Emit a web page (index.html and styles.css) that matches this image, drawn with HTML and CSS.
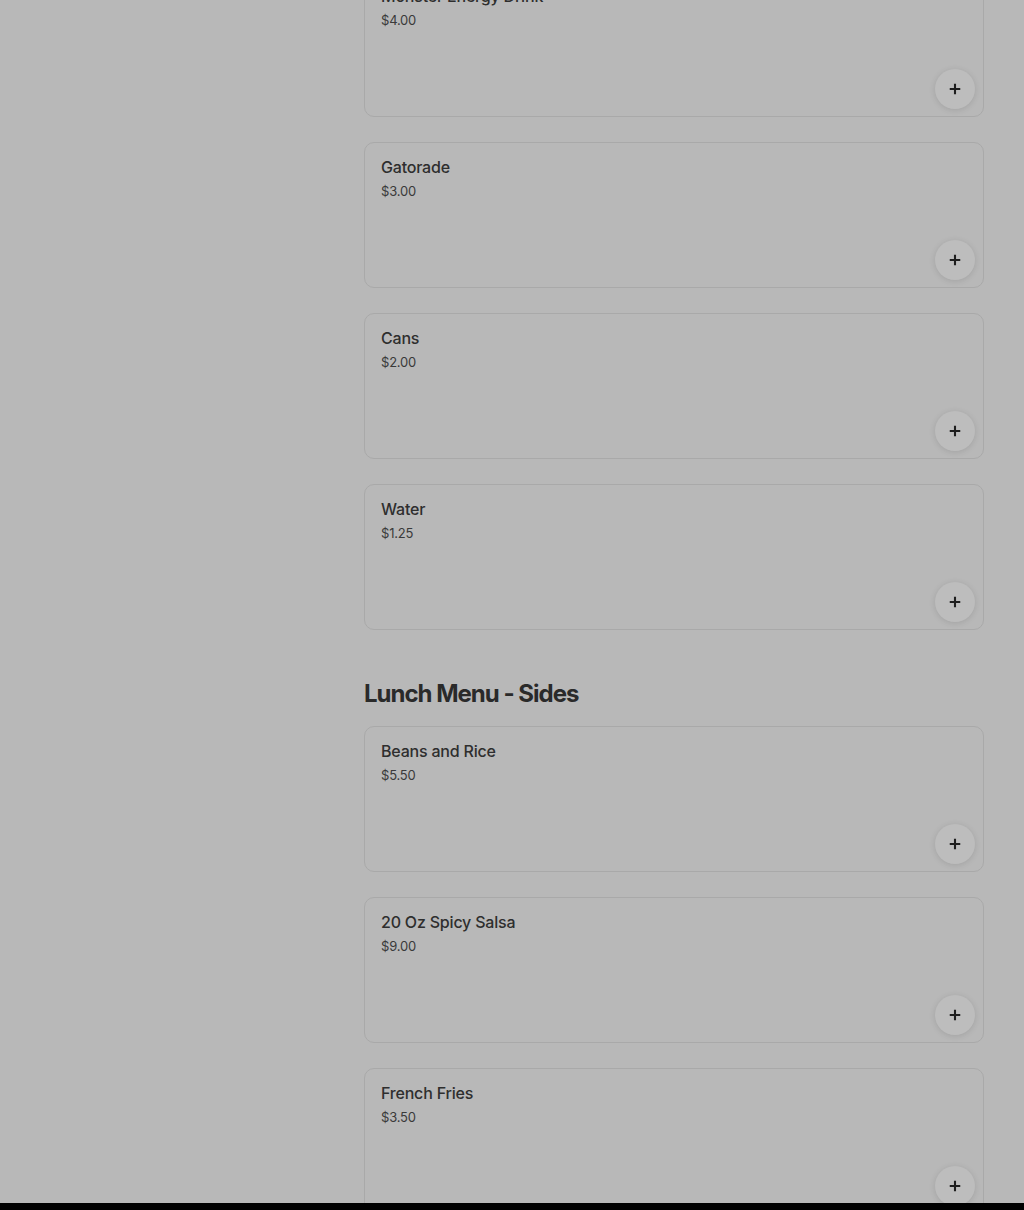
FILE: index.html
```html
<!DOCTYPE html>
<html>
<head>
<meta charset="utf-8">
<link rel="stylesheet" href="styles.css">
</head>
<body>
<div class="page">
  <main class="menu">
    <section class="group">
      <div class="card"><div class="info"><div class="name">Monster Energy Drink</div><div class="price">$4.00</div></div><button class="add" aria-label="Add"><svg viewBox="0 0 16 16" width="14" height="14"><path d="M8 2v12M2 8h12" stroke="#1e1e1e" stroke-width="2.4"/></svg></button></div>
      <div class="card"><div class="info"><div class="name">Gatorade</div><div class="price">$3.00</div></div><button class="add" aria-label="Add"><svg viewBox="0 0 16 16" width="14" height="14"><path d="M8 2v12M2 8h12" stroke="#1e1e1e" stroke-width="2.4"/></svg></button></div>
      <div class="card"><div class="info"><div class="name">Cans</div><div class="price">$2.00</div></div><button class="add" aria-label="Add"><svg viewBox="0 0 16 16" width="14" height="14"><path d="M8 2v12M2 8h12" stroke="#1e1e1e" stroke-width="2.4"/></svg></button></div>
      <div class="card"><div class="info"><div class="name">Water</div><div class="price">$1.25</div></div><button class="add" aria-label="Add"><svg viewBox="0 0 16 16" width="14" height="14"><path d="M8 2v12M2 8h12" stroke="#1e1e1e" stroke-width="2.4"/></svg></button></div>
    </section>
    <h2 class="heading">Lunch Menu - Sides</h2>
    <section class="group">
      <div class="card"><div class="info"><div class="name">Beans and Rice</div><div class="price">$5.50</div></div><button class="add" aria-label="Add"><svg viewBox="0 0 16 16" width="14" height="14"><path d="M8 2v12M2 8h12" stroke="#1e1e1e" stroke-width="2.4"/></svg></button></div>
      <div class="card"><div class="info"><div class="name">20 Oz Spicy Salsa</div><div class="price">$9.00</div></div><button class="add" aria-label="Add"><svg viewBox="0 0 16 16" width="14" height="14"><path d="M8 2v12M2 8h12" stroke="#1e1e1e" stroke-width="2.4"/></svg></button></div>
      <div class="card"><div class="info"><div class="name">French Fries</div><div class="price">$3.50</div></div><button class="add" aria-label="Add"><svg viewBox="0 0 16 16" width="14" height="14"><path d="M8 2v12M2 8h12" stroke="#1e1e1e" stroke-width="2.4"/></svg></button></div>
    </section>
  </main>
</div>
<div class="bottom-bar"></div>
</body>
</html>
```

FILE: styles.css
```css
html, body {
  margin: 0;
  padding: 0;
  background: #b8b8b8;
  font-family: Inter, "Noto Sans", "Liberation Sans", sans-serif;
  overflow: hidden;
  height: 1210px;
}
.page {
  display: flex;
  justify-content: flex-end;
  padding-right: 40px;
}
.menu {
  width: 620px;
  margin-top: -29px;
  display: flex;
  flex-direction: column;
}
.group {
  display: flex;
  flex-direction: column;
  gap: 25px;
}
.card {
  position: relative;
  box-sizing: border-box;
  height: 146px;
  border: 1px solid #a9a9a9;
  border-radius: 10px;
  padding: 12px 16px 13px;
  display: flex;
  flex-direction: column;
  justify-content: space-between;
}
.name {
  font-size: 16px;
  font-weight: 500;
  color: #2e2e2e;
  line-height: 24px;
  letter-spacing: -0.2px;
}
.price {
  font-size: 13px;
  color: #3a3a3a;
  line-height: 20px;
  margin-top: 2px;
  letter-spacing: -0.2px;
}
.add {
  align-self: flex-end;
  width: 40px;
  height: 40px;
  border-radius: 50%;
  border: none;
  background: #bdbdbd;
  box-shadow: 0 1px 6px rgba(0,0,0,0.12);
  display: flex;
  align-items: center;
  justify-content: center;
  margin-right: -8px;
  margin-bottom: -6px;
  padding: 0;
}
.heading {
  margin: 47px 0 15px;
  font-size: 24px;
  font-weight: 700;
  color: #2a2a2a;
  letter-spacing: -1px;
  line-height: 34px;
}
.bottom-bar {
  position: fixed;
  left: 0;
  right: 0;
  bottom: 0;
  height: 7px;
  background: #000;
}
```
